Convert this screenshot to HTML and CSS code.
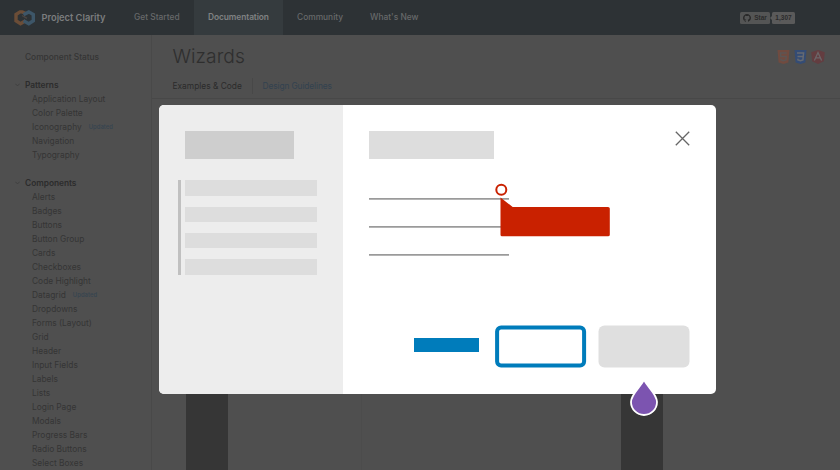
FILE: index.html
```html
<!DOCTYPE html>
<html lang="en">
<head>
<meta charset="utf-8">
<title>Project Clarity - Wizards</title>
<link rel="stylesheet" href="styles.css">
</head>
<body>
<header class="header">
  <svg class="logo" width="22" height="16" viewBox="0 0 22 16" fill="none" stroke-width="3.4">
    <path d="M12.3 3.8 8.2 1.9 6 1.9 2 4.5V10.8L6.5 13.7 11.5 10.8" stroke="#6b4d37"/>
    <path d="M9.5 4.8 14.8 1.9 19.3 4.5V10.8L14.8 13.7 9.5 10.8" stroke="#3d5668"/>
    <path d="M8 5.5 13 8.3" stroke="#4b4542" stroke-width="1.4"/>
  </svg>
  <span class="brand">Project Clarity</span>
  <nav class="nav">
    <a class="get-started">Get Started</a>
    <a class="docs">Documentation</a>
    <a class="community">Community</a>
    <a class="news">What's New</a>
  </nav>
  <div class="github">
    <span class="star"><svg width="8" height="8" viewBox="0 0 16 16"><path fill="#292929" d="M8 0C3.58 0 0 3.58 0 8c0 3.54 2.29 6.53 5.47 7.59.4.07.55-.17.55-.38v-1.49c-2.23.48-2.69-.94-2.69-.94-.36-.93-.89-1.18-.89-1.18-.73-.5.05-.49.05-.49.81.06 1.23.83 1.23.83.72 1.23 1.87.87 2.33.66.07-.52.28-.87.51-1.07-1.78-.2-3.64-.89-3.64-3.95 0-.87.31-1.59.82-2.15-.08-.2-.36-1.02.08-2.12 0 0 .67-.21 2.2.82a7.6 7.6 0 0 1 4 0c1.53-1.04 2.2-.82 2.2-.82.44 1.1.16 1.92.08 2.12.51.56.82 1.27.82 2.15 0 3.07-1.87 3.75-3.65 3.95.29.25.54.73.54 1.48v2.2c0 .21.15.46.55.38A8 8 0 0 0 16 8c0-4.42-3.58-8-8-8Z"/></svg>Star</span>
    <span class="count">1,307</span>
  </div>
</header>
<div class="page">
  <aside class="sidebar">
    <h2 class="status">Component Status</h2>
    <h3><svg width="5" height="4" viewBox="0 0 5 4"><path d="M.3.7 2.5 2.9 4.7.7" fill="none" stroke="#3c3c3c" stroke-width=".8"/></svg>Patterns</h3>
    <ul>
      <li>Application Layout</li><li>Color Palette</li><li>Iconography<small>Updated</small></li><li>Navigation</li><li>Typography</li>
    </ul>
    <h3><svg width="5" height="4" viewBox="0 0 5 4"><path d="M.3.7 2.5 2.9 4.7.7" fill="none" stroke="#3c3c3c" stroke-width=".8"/></svg>Components</h3>
    <ul>
      <li>Alerts</li><li>Badges</li><li>Buttons</li><li>Button Group</li><li>Cards</li><li>Checkboxes</li><li>Code Highlight</li><li>Datagrid<small>Updated</small></li><li>Dropdowns</li><li>Forms (Layout)</li><li>Grid</li><li>Header</li><li>Input Fields</li><li>Labels</li><li>Lists</li><li>Login Page</li><li>Modals</li><li>Progress Bars</li><li>Radio Buttons</li><li>Select Boxes</li>
    </ul>
  </aside>
  <main class="content">
    <div class="intro">
      <div class="title-row">
        <h1>Wizards</h1>
        <div class="badges">
          <svg width="13" height="14" viewBox="0 0 13 14"><path d="M.5 0h12l-1.1 12.4-4.9 1.5-4.9-1.5Z" fill="#704b40"/><path d="M9.7 3H3.5l.3 3.5h5.4L8.9 10l-2.4.8L4 10 3.8 8.5" fill="none" stroke="#5c5654" stroke-width="1.5"/></svg>
          <svg width="13" height="14" viewBox="0 0 13 14"><path d="M.5 0h12l-1.1 12.4-4.9 1.5-4.9-1.5Z" fill="#344c75"/><path d="M3 3h6.6L8.9 10l-2.4.8L4 10 3.8 8.7M3.5 6.5h5.6" fill="none" stroke="#666a72" stroke-width="1.5"/></svg>
          <svg width="14" height="14" viewBox="0 0 14 14"><path d="m7 0 6.8 2.3-1 9L7 14l-5.8-2.7-1-9Z" fill="#633d40"/><path d="M3.4 10.4 7 2.5l3.6 7.9M4.9 7.8h4.2" fill="none" stroke="#6c6668" stroke-width="1.3"/></svg>
        </div>
      </div>
      <div class="tabs"><span class="tab-code">Examples &amp; Code</span><i></i><span class="tab-design">Design Guidelines</span></div>
    </div>
    <div class="demo"><div class="column"></div><div class="space"></div><div class="column"></div></div>
  </main>
</div>

<section class="modal">
  <div class="steps">
    <div class="steps-title"></div>
    <div class="step-list"><div></div><div></div><div></div><div></div></div>
  </div>
  <div class="wizard">
    <div class="wizard-head">
      <div class="wizard-title"></div>
      <svg width="15" height="15" viewBox="0 0 15 15"><path d="m.8.8 13.4 13.4M14.2.8.8 14.2" fill="none" stroke="#666" stroke-width="1.3"/></svg>
    </div>
    <div class="fields"><div></div><div></div><div></div></div>
    <div class="actions">
      <div class="link"></div>
      <svg class="outline" width="92" height="43" viewBox="0 0 92 43"><rect x="2.1" y="2.4" width="87" height="38.2" rx="4" fill="#fff" stroke="#007cbb" stroke-width="4"/></svg>
      <svg width="92" height="43" viewBox="0 0 92 43"><rect x=".5" y=".4" width="91" height="42.2" rx="6" fill="#dfdfdf"/></svg>
    </div>
  </div>
  <svg class="error" width="112" height="56" viewBox="0 0 112 56"><circle cx="2.3" cy="6.8" r="5" fill="#fff" stroke="#c92100" stroke-width="2"/><path d="M1.5 14.5 13.7 24H109q1.8 0 1.8 1.5V51.7q0 1.5-1.8 1.5H3q-1.5 0-1.5-1.5Z" fill="#c92100"/></svg>
  <svg class="drop" width="30" height="38" viewBox="0 0 30 38"><path d="M15 .7C12 7.5 2 15.2 2 23a13 13 0 0 0 26 0C28 15.2 18 7.5 15 .7Z" fill="#7c54b0" stroke="#fff" stroke-width="1.8"/></svg>
</section>
</body>
</html>
```
FILE: styles.css
```css
* { box-sizing: border-box; }
body { margin: 0; width: 840px; height: 470px; overflow: hidden; position: relative; background: #4f4f4f; color: #353535; font-family: Inter, sans-serif; font-size: 8.4px; }
h1, h2, h3, ul { margin: 0; padding: 0; font-weight: 400; }
.header { display: flex; align-items: center; height: 35px; padding-left: 14px; background: #2d3235; color: #67696a; }
.logo { width: 22px; flex: none; }
.brand { width: 71.5px; margin-left: 5.5px; font-size: 9.3px; font-weight: 600; white-space: nowrap; color: #7b7d7e; }
.nav { display: flex; align-self: stretch; line-height: 35px; }
.nav a { white-space: nowrap; font-weight: 500; }
.get-started { width: 81px; padding-left: 21px; }
.nav .docs { width: 89px; padding-left: 14px; background: #353b3e; color: #808283; font-weight: 600; letter-spacing: -.08px; }
.community { width: 73px; padding-left: 14px; }
.news { padding-left: 14px; }
.github { display: flex; gap: 2px; margin-left: auto; margin-right: 45px; font: 700 6.5px "Liberation Sans", sans-serif; color: #2b2b2b; }
.github span { display: flex; align-items: center; justify-content: center; height: 12px; border-radius: 1.5px; background: #545555; }
.star { width: 30px; gap: 3px; }
.github .count { width: 23px; background: #5a5a5a; position: relative; }
.count::before { content: ""; position: absolute; left: -2px; top: 4px; border: 2px solid transparent; border-left: 0; border-right-color: #5a5a5a; }
.page { display: flex; height: 435px; }
.sidebar { width: 151.5px; border-right: 1px solid #494949; padding: 14.5px 0 0 25px; line-height: 14px; white-space: nowrap; overflow: hidden; }
.status { font-size: 8.4px; font-weight: 500; letter-spacing: -.02px; margin-bottom: 14px; }
h3 { display: flex; align-items: center; gap: 5px; margin-left: -10px; font-size: 8.4px; font-weight: 600; letter-spacing: -.04px; color: #2c2c2c; }
.sidebar ul { list-style: none; padding-left: 7px; margin-bottom: 14px; }
.sidebar li { height: 14px; }
.sidebar small { font-size: 5.8px; font-weight: 500; letter-spacing: .1px; margin-left: 7px; vertical-align: 1px; color: #354450; }
.content { flex: 1; display: flex; flex-direction: column; }
.intro { height: 63.5px; padding: 9px 15.5px 0 21px; border-bottom: 1px solid #484848; }
.title-row { display: flex; height: 24px; justify-content: space-between; }
h1 { font-size: 19.2px; line-height: 24px; font-weight: 300; letter-spacing: .05px; color: #2e2e2e; }
.badges { display: flex; gap: 4px; padding-top: 6px; }
.tabs { display: flex; height: 16px; margin-top: 10px; line-height: 16px; color: #2b2b2b; white-space: nowrap; }
.tab-code { width: 79.5px; }
.tabs i { width: 10.5px; border-left: 1px solid #484848; }
.tab-design { color: #32424f; letter-spacing: -.12px; }
.demo { flex: 1; display: flex; padding: 280px 177px 0 34.5px; }
.column { width: 42px; background: #363636; }
.space { width: 393px; }
.space::before { content: ""; display: block; width: 133px; height: 100%; border-right: 1px solid #4c4c4c; }
.modal { position: absolute; left: 159.4px; top: 105px; width: 556.2px; height: 288.7px; display: flex; border-radius: 5px; background: #fff; }
.steps { width: 183.6px; padding: 26.3px 26px 0 18.2px; background: #ededed; border-radius: 5px 0 0 5px; }
.steps-title { width: 108.6px; height: 28px; margin-left: 7.8px; background: #cecece; }
.step-list { display: flex; flex-direction: column; gap: 11px; height: 94.7px; margin-top: 21px; padding-left: 4.8px; border-left: 3px solid #c0c0c0; }
.step-list div { width: 131.8px; height: 15.4px; background: #ddd; }
.wizard { flex: 1; padding: 26.3px 26px 0 26.2px; }
.wizard-head { display: flex; justify-content: space-between; height: 28px; }
.wizard-title { width: 125.3px; background: #ddd; }
.fields { display: flex; flex-direction: column; gap: 26px; margin-top: 38.3px; }
.fields div { width: 140px; height: 2px; background: linear-gradient(#9a9a9a 50%, #b4b4b4 50%); }
.actions { display: flex; justify-content: flex-end; align-items: center; height: 43px; margin-top: 69.5px; }
.link { width: 65px; height: 14px; margin-right: 16px; margin-top: -3px; background: #007cbb; }
.outline { margin-right: 11px; }
.error { position: absolute; left: 339.6px; top: 78px; overflow: visible; }
.drop { position: absolute; left: 469.6px; top: 273.5px; }
```
